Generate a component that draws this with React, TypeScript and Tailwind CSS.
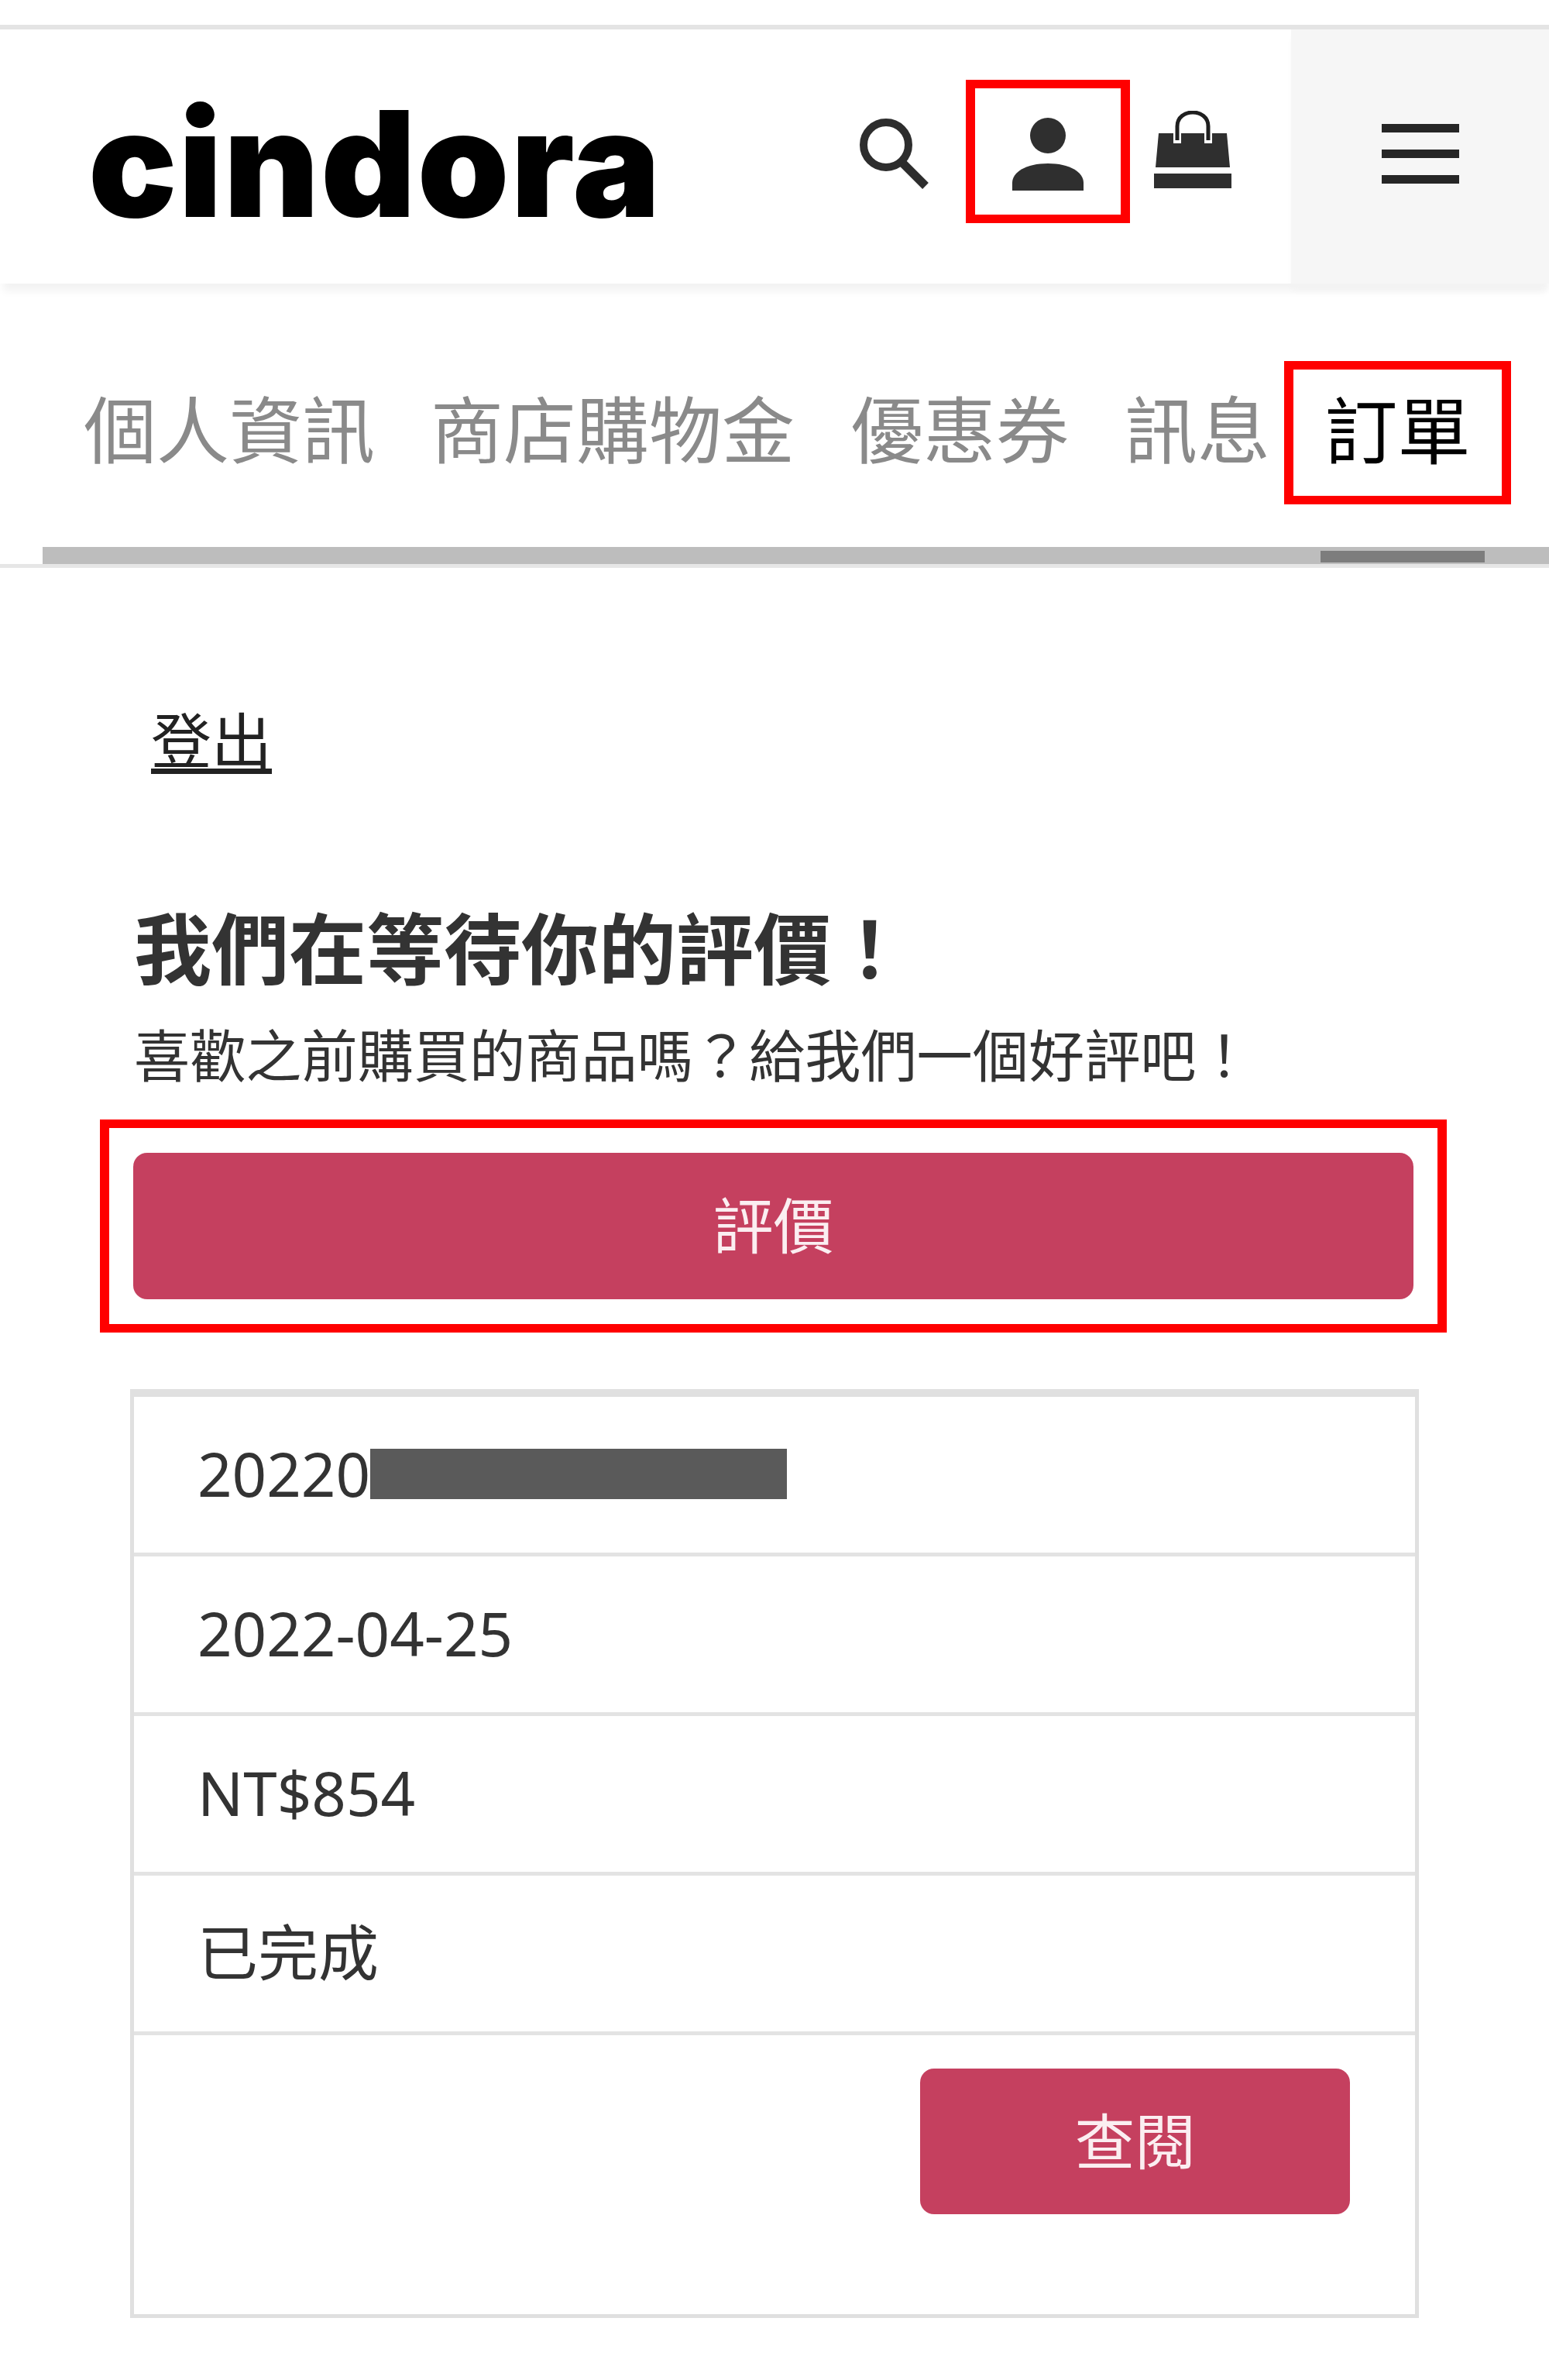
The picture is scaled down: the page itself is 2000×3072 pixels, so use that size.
const cjk = "font-['Noto_Sans','Noto_Sans_CJK_TC',sans-serif]";

function Tab({ label }: { label: string }) {
  return <span className="whitespace-nowrap text-[94px] leading-none text-[#8a8a8a]">{label}</span>;
}

function Row({ children }: { children: React.ReactNode }) {
  return (
    <div className="flex h-[206px] items-center border-b-[5px] border-[#e3e3e3] pb-[2px] pl-[82px] text-[78px] text-[#333333]">
      {children}
    </div>
  );
}

function SearchIcon() {
  return (
    <svg viewBox="0 0 90 92" className="h-[92px] w-[90px]" fill="none" stroke="#2d2d2d">
      <circle cx="34" cy="35" r="29" strokeWidth="10" />
      <path d="M55 58 L85 88" strokeWidth="11" />
    </svg>
  );
}

function PersonIcon() {
  return (
    <svg viewBox="0 0 92 94" className="h-[94px] w-[92px]" fill="#2f2f2f">
      <ellipse cx="46" cy="23" rx="23" ry="23" />
      <path d="M0 94 V84 C0 70 18 59 46 59 C74 59 92 70 92 84 V94 Z" />
    </svg>
  );
}

function BagIcon() {
  return (
    <svg viewBox="0 0 100 100" className="h-[100px] w-[100px]">
      <path d="M6 29 H94 L98 73 H2 Z" fill="#2f2f2f" />
      <rect x="0" y="81" width="100" height="19" fill="#2f2f2f" />
      <path d="M30 42 V20 C30 -4 70 -4 70 20 V42" fill="none" stroke="#ffffff" strokeWidth="10" />
      <path d="M30 38 V20 C30 -4 70 -4 70 20 V38" fill="none" stroke="#1f1f1f" strokeWidth="5" />
    </svg>
  );
}

export default function App() {
  return (
    <div className={`h-[3072px] w-[2000px] overflow-hidden bg-white pt-[32px] ${cjk}`}>
      <header className="flex h-[334px] border-t-[6px] border-[#e4e4e4] shadow-[0_14px_10px_-4px_#f3f3f3]">
        <div className="flex flex-1 items-center pl-[114px]">
          <span className="mt-[18px] w-[858px] font-['Inter',sans-serif] text-[190px] leading-none font-black tracking-[2px] text-black">
            cindora
          </span>
          <div className="flex items-center">
            <div className="mt-[-9px] mr-[47px] ml-[138px]">
              <SearchIcon />
            </div>
            <div className="mt-[-13px] flex h-[185px] w-[212px] items-center justify-center border-x-[12px] border-y-[11px] border-[#ff0000] pt-[6px]">
              <PersonIcon />
            </div>
            <div className="mt-[-18px] ml-[31px]">
              <BagIcon />
            </div>
          </div>
        </div>
        <div className="flex w-[333px] flex-col items-center justify-center gap-[22px] bg-[#f6f6f6] pb-[7px] pl-[1px] shadow-[0_10px_8px_-2px_#f3f3f3]">
          <span className="h-[11px] w-[100px] bg-[#262626]" />
          <span className="h-[11px] w-[100px] bg-[#262626]" />
          <span className="h-[11px] w-[100px] bg-[#262626]" />
        </div>
      </header>

      <nav className="mt-[100px] flex h-[185px] items-center pl-[108px]">
        <div className="mb-[8px] flex items-center gap-[72px]">
          <Tab label="個人資訊" />
          <Tab label="商店購物金" />
          <Tab label="優惠券" />
          <Tab label="訊息" />
        </div>
        <div className="ml-[18px] flex h-[185px] w-[293px] items-center justify-center border-x-[12px] border-y-[11px] border-[#ff0000] pb-[6px] text-[94px] leading-none text-black">
          訂單
        </div>
      </nav>

      <div className="mt-[55px] border-b-[5px] border-[#e6e6e6] pl-[55px]">
        <div className="flex h-[22px] items-start justify-end bg-[#bdbdbd] pt-[5px] pr-[83px]">
          <span className="h-[15px] w-[212px] bg-[#7d7d7d]" />
        </div>
      </div>

      <main className="pt-[178px]">
        <a className="ml-[195px] block w-fit text-[78px] leading-[90px] text-[#222222] underline underline-offset-[6px]">
          登出
        </a>

        <section className="mt-[163px] pl-[173px]">
          <h1 className="text-[100px] leading-[120px] font-bold text-[#333333]">我們在等待你的評價！</h1>
          <p className="mt-[33px] text-[72.2px] leading-[90px] text-[#333333]">喜歡之前購買的商品嗎？給我們一個好評吧！</p>
        </section>

        <div className="mt-[38px] ml-[129px] w-[1739px] border-x-[12px] border-y-[11px] border-[#ff0000] px-[31px] py-[32px]">
          <button className="flex h-[189px] w-full items-center justify-center rounded-[18px] bg-[#c5405f] text-[78px] text-[#fbeef1]">
            評價
          </button>
        </div>

        <div className="mt-[73px] ml-[168px] h-[1199px] w-[1664px] border-x-[5px] border-t-[10px] border-b-[5px] border-[#e0e0e0]">
          <Row>
            <span>20220</span>
            <span className="h-[65px] w-[538px] bg-[#5a5a5a]" />
          </Row>
          <Row>2022-04-25</Row>
          <Row>NT$854</Row>
          <Row>已完成</Row>
          <div className="flex justify-end pt-[43px] pr-[84px]">
            <button className="flex h-[188px] w-[555px] items-center justify-center rounded-[18px] bg-[#c5405f] text-[78px] text-[#fbeef1]">
              查閱
            </button>
          </div>
        </div>
      </main>
    </div>
  );
}
